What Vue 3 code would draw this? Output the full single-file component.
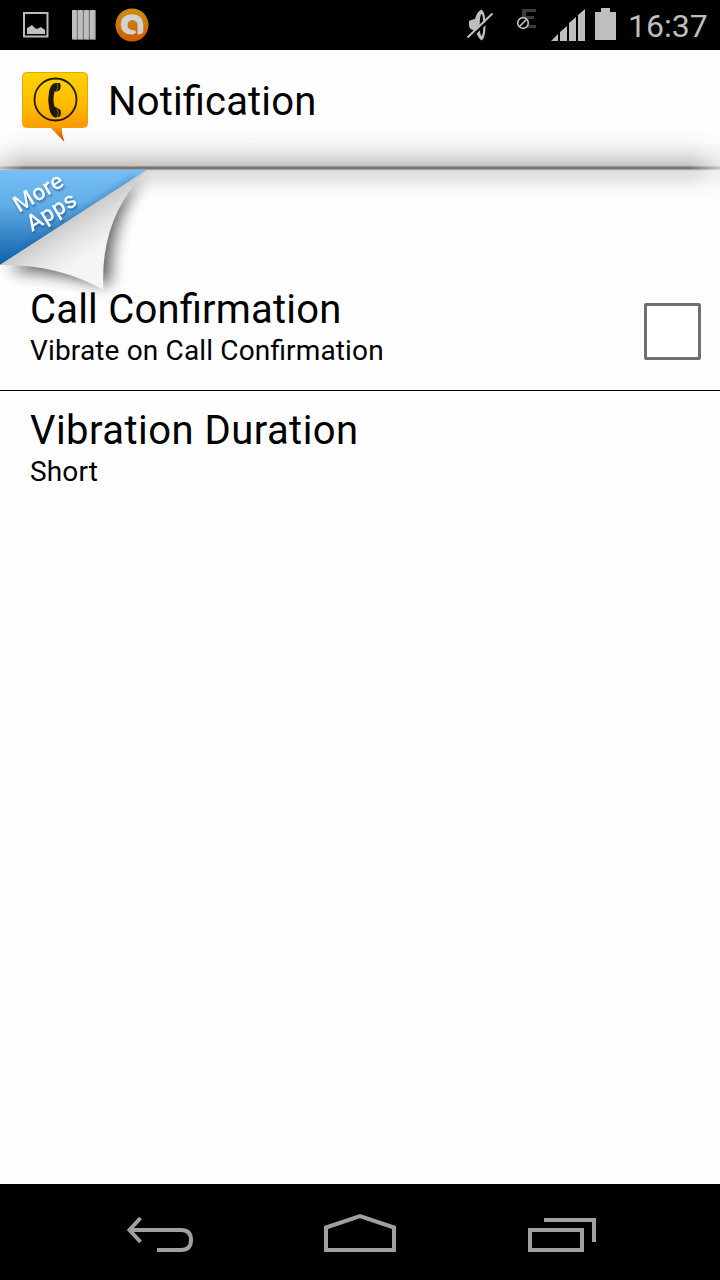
<script setup>
import { ref } from "vue";

const time = ref("16:37");
const vibrateOnCall = ref(false);
const duration = ref("Short");
</script>

<template>
  <div class="screen">
    <header class="status-bar">
      <svg class="status-icons" width="160" height="50" viewBox="0 0 160 50">
        <defs>
          <linearGradient id="avast" x1="0" y1="0" x2="0" y2="1">
            <stop offset="0" stop-color="#cc900c" />
            <stop offset="1" stop-color="#cc5c04" />
          </linearGradient>
        </defs>
        <rect x="24" y="13" width="23.5" height="23.5" fill="none" stroke="#b8bcb8" stroke-width="2" />
        <path d="M27 34V28l2-1 3-2 3 3 2 1 4-2 4 3v4z" fill="#c0c0c0" />
        <g v-for="n in 4" :key="n">
          <rect :x="66 + n * 6" y="10" width="6" height="30" rx="1" fill="#777" />
          <rect :x="66 + n * 6" y="10" width="4.8" height="29" rx="1" fill="#bebebe" />
        </g>
        <circle cx="132" cy="25" r="16.5" fill="url(#avast)" />
        <path
          d="M137.500 34.500V25a5 5 0 1 0-5.500 5q4.500 0 4 2.500-1 2-4 2-11 0-11.300-10 .3-10 11.300-10.300 11 .3 11.300 10.300v7q-1 3-5.800 3z"
          fill="#d2d2d2"
        />
      </svg>

      <div class="status-right">
        <svg width="170" height="50" viewBox="450 0 170 50">
          <path d="M469 21q3-1.500 6-2 2-8 6.500-9.500 4 3 4 15.500t-3.500 15.500q-4-2-6-9l-3-1.500q-4-1-4-5z" fill="#bebebe" />
          <ellipse cx="481.500" cy="25" rx="1.800" ry="11" fill="#000" />
          <path d="M468 39.500 494.500 15.500" stroke="#000" stroke-width="2.500" />
          <path d="M467.500 37.500 492.500 13.500" stroke="#bebebe" stroke-width="2" />
          <path d="M522 9h14v3h-10v4h8v3h-8v6h10v3h-14z" fill="#3c3c3c" />
          <circle cx="523" cy="23" r="5.300" fill="#000" stroke="#bebebe" stroke-width="1.700" />
          <path d="m519.500 26.500 7-7" stroke="#bebebe" stroke-width="1.700" />
          <path
            d="M551 41l7-7v7zM560 32l7-6v15h-7zM569 23l7-6v24h-7zM578 15l7-6v32h-7z"
            fill="#bebebe"
          />
          <path d="M595 12h6V8h9v4h6v28h-21z" fill="#bebebe" />
        </svg>
        <span class="time">{{ time }}</span>
      </div>
    </header>

    <div class="title-bar">
      <svg class="app-icon" width="66" height="71" viewBox="0 0 66 71">
        <defs>
          <linearGradient id="bubble" x1="0.500" y1="0" x2="0.600" y2="1">
            <stop offset="0" stop-color="#ffd200" />
            <stop offset="0.600" stop-color="#ffbb00" />
            <stop offset="1" stop-color="#fb9906" />
          </linearGradient>
          <linearGradient id="tail" x1="0" y1="0" x2="0" y2="1">
            <stop offset="0" stop-color="#f99b08" />
            <stop offset="1" stop-color="#d8440a" />
          </linearGradient>
        </defs>
        <path d="M28 55h12q-1 4 2.500 15z" fill="url(#tail)" />
        <rect x="0.500" y="0.500" width="65" height="55" rx="4" fill="url(#bubble)" stroke="#eda600" />
        <circle cx="33.500" cy="27.500" r="21" fill="none" stroke="#1e1a05" stroke-width="1.800" />
        <path
          d="M33 11h5q1.500 3 0 7l-3 1.500h-2.500q-2 7.500 0 15l3 1.500 3 2q1 4-.5 6.500l-4.500 1q-5-1-6.500-10-1.500-8 0-16 1.500-7.500 6-8.500z"
          fill="#1e1a05"
        />
        <path d="M35.500 11.500q1 3.500-1 7.500M35 36.500q2 4 .5 8" fill="none" stroke="#a67c00" stroke-width="0.800" />
      </svg>
      <h1>Notification</h1>
    </div>

    <main class="content">
      <svg class="more-apps" width="180" height="150" viewBox="0 0 180 150">
        <defs>
          <linearGradient id="ribbon" x1="0" y1="0" x2="0" y2="1">
            <stop offset="0" stop-color="#77bff7" />
            <stop offset="0.350" stop-color="#62aee8" />
            <stop offset="1" stop-color="#0c5fa8" />
          </linearGradient>
          <linearGradient id="fold" gradientUnits="userSpaceOnUse" x1="66" y1="52" x2="92" y2="92">
            <stop offset="0" stop-color="#cbcbcb" />
            <stop offset="0.400" stop-color="#e3e3e3" />
            <stop offset="0.850" stop-color="#f5f5f5" />
          </linearGradient>
          <filter id="soft" x="-30%" y="-30%" width="160%" height="160%">
            <feGaussianBlur stdDeviation="8" />
          </filter>
          <filter id="crease" x="-30%" y="-30%" width="160%" height="160%">
            <feGaussianBlur stdDeviation="3" />
          </filter>
          <clipPath id="corner">
            <path d="M0 0h147L0 95z" />
          </clipPath>
        </defs>
        <path d="M145 6Q108 48 110 116 60 102 8 100z" fill="#000" opacity="0.650" filter="url(#soft)" />
        <path d="M0 0h147L0 95z" fill="url(#ribbon)" />
        <g clip-path="url(#corner)">
          <path d="M135 8 25 79" stroke="#174f80" stroke-width="4" opacity="0.450" filter="url(#crease)" />
        </g>
        <path d="M147 0Q99 49 103.500 120 58 94 0 95z" fill="url(#fold)" />
        <g class="ribbon-text">
          <text transform="translate(19 43) rotate(-31)" textLength="54">More</text>
          <text transform="translate(32 62) rotate(-31)" textLength="54">Apps</text>
        </g>
      </svg>

      <label class="preference">
        <div class="text">
          <h2>Call Confirmation</h2>
          <p>Vibrate on Call Confirmation</p>
        </div>
        <input v-model="vibrateOnCall" type="checkbox" />
      </label>
      <div class="preference">
        <div class="text">
          <h2 class="wide">Vibration Duration</h2>
          <p>{{ duration }}</p>
        </div>
      </div>
    </main>

    <nav class="nav-bar">
      <svg width="720" height="96" viewBox="0 0 720 96" fill="none" stroke="#a0a0a0" stroke-width="4">
        <path d="M129 46h52q10 0 10 10t-10 10h-24" />
        <path d="M140.500 34 129.500 46 140.500 58" />
        <path d="M326 66V43.500l34-11.500 34 11.500V66z" />
        <path d="M530 46h52v20h-52zM544 36h50v22" />
      </svg>
    </nav>
  </div>
</template>

<style>
body {
  margin: 0;
}
</style>

<style scoped>
.screen {
  display: flex;
  flex-direction: column;
  width: 720px;
  height: 1280px;
  overflow: hidden;
  background: #fefefe;
  color: #000;
  font-family: Roboto, "Noto Sans", sans-serif;
  font-feature-settings: "liga" 1;
}

.status-bar {
  display: flex;
  justify-content: space-between;
  height: 50px;
  background: #000;
}

.status-right {
  display: flex;
  width: 270px;
}

.time {
  padding-left: 8px;
  color: #bebebe;
  font-size: 32px;
  line-height: 52px;
}

.title-bar {
  position: relative;
  display: flex;
  box-sizing: border-box;
  gap: 20px;
  height: 120px;
  padding: 22px 22px 0;
}

/* shading on both sides of the line under the title */
.title-bar::after {
  content: "";
  position: absolute;
  left: 0;
  right: 0;
  top: 80px;
  height: 70px;
  background: linear-gradient(
    to bottom,
    transparent 0,
    #f7f7f7 12px,
    #e5e5e5 23px,
    #c8c8c8 35px,
    #bcbcbc 36px,
    #777 37px,
    #777 39px,
    #c8c8c8 40px,
    #dedede 41px,
    #e5e5e5 48px,
    #f8f8f8 60px,
    transparent 70px
  );
  mask-image: linear-gradient(to right, rgba(0, 0, 0, 0.5), #000 24px, #000 690px, rgba(0, 0, 0, 0.4));
}

.app-icon {
  position: relative;
  z-index: 1;
  flex: none;
}

h1,
h2,
p {
  margin: 0;
  font-weight: 400;
}

h1 {
  font-size: 40px;
  line-height: 60px;
  letter-spacing: 0.15px;
}

.content {
  position: relative;
  flex: 1;
  padding-top: 100px;
}

.more-apps {
  position: absolute;
  top: 0;
  left: 0;
  overflow: visible;
}

.ribbon-text {
  fill: #f4f9fd;
  font-size: 23px;
  font-weight: 500;
  filter: drop-shadow(1px 2px 1px rgba(20, 70, 120, 0.6));
}

.preference {
  position: relative;
  display: flex;
  align-items: flex-start;
  justify-content: space-between;
  box-sizing: border-box;
  height: 121px;
  padding: 17px 19px 0 30px;
}

label.preference {
  border-bottom: 1px solid #000;
}

h2 {
  font-size: 40px;
  line-height: 46px;
  letter-spacing: 0.2px;
}

.wide {
  letter-spacing: 0.46px;
}

p {
  font-size: 28px;
  line-height: 36px;
  letter-spacing: 0.15px;
}

input {
  box-sizing: border-box;
  width: 57px;
  height: 57px;
  margin: 16px 0 0;
  appearance: none;
  border: 3px solid #707070;
  border-radius: 2px;
  background: #fff;
}

.nav-bar {
  height: 96px;
  background: #000;
}
</style>
